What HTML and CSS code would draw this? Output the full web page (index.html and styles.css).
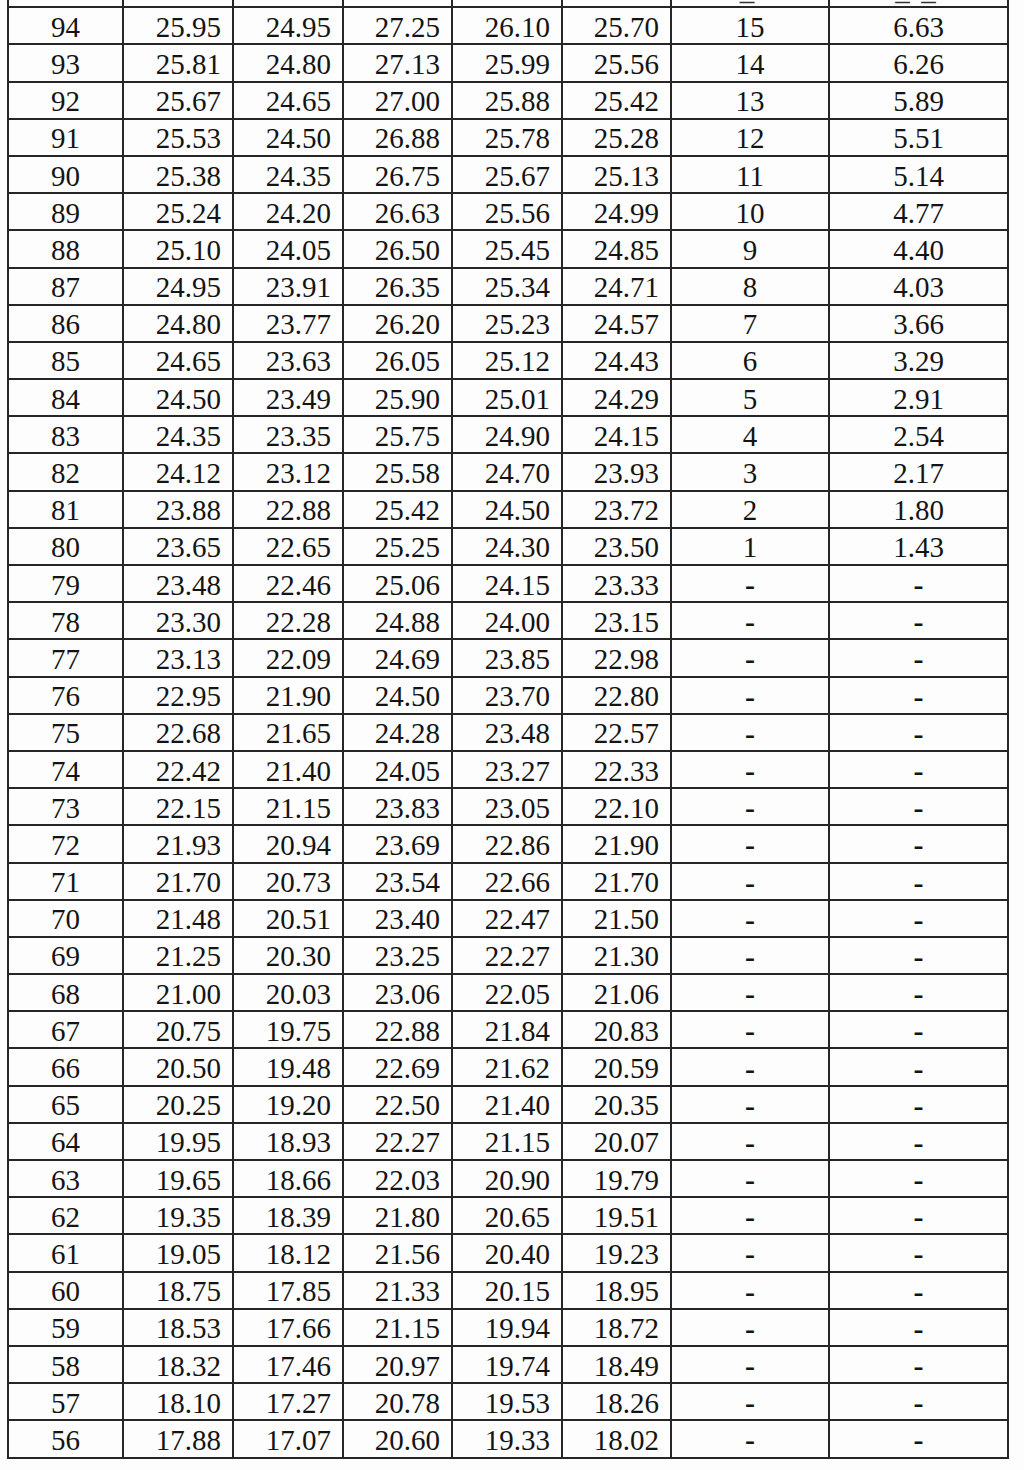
FILE: index.html
```html
<!DOCTYPE html>
<html>
<head>
<meta charset="utf-8">
<link rel="stylesheet" href="styles.css">
</head>
<body>
<table class="grid">
<colgroup>
<col class="c1"><col class="c2"><col class="c3"><col class="c4"><col class="c5"><col class="c6"><col class="c7"><col class="c8">
</colgroup>
<thead>
<tr><th>Item</th><th>R50</th><th>B50</th><th>C50</th><th>D5x</th><th>R5x</th><th>Item_Total</th><th>Sum_s_Total</th></tr>
</thead>
<tbody>
<tr><td>94</td><td>25.95</td><td>24.95</td><td>27.25</td><td>26.10</td><td>25.70</td><td>15</td><td>6.63</td></tr>
<tr><td>93</td><td>25.81</td><td>24.80</td><td>27.13</td><td>25.99</td><td>25.56</td><td>14</td><td>6.26</td></tr>
<tr><td>92</td><td>25.67</td><td>24.65</td><td>27.00</td><td>25.88</td><td>25.42</td><td>13</td><td>5.89</td></tr>
<tr><td>91</td><td>25.53</td><td>24.50</td><td>26.88</td><td>25.78</td><td>25.28</td><td>12</td><td>5.51</td></tr>
<tr><td>90</td><td>25.38</td><td>24.35</td><td>26.75</td><td>25.67</td><td>25.13</td><td>11</td><td>5.14</td></tr>
<tr><td>89</td><td>25.24</td><td>24.20</td><td>26.63</td><td>25.56</td><td>24.99</td><td>10</td><td>4.77</td></tr>
<tr><td>88</td><td>25.10</td><td>24.05</td><td>26.50</td><td>25.45</td><td>24.85</td><td>9</td><td>4.40</td></tr>
<tr><td>87</td><td>24.95</td><td>23.91</td><td>26.35</td><td>25.34</td><td>24.71</td><td>8</td><td>4.03</td></tr>
<tr><td>86</td><td>24.80</td><td>23.77</td><td>26.20</td><td>25.23</td><td>24.57</td><td>7</td><td>3.66</td></tr>
<tr><td>85</td><td>24.65</td><td>23.63</td><td>26.05</td><td>25.12</td><td>24.43</td><td>6</td><td>3.29</td></tr>
<tr><td>84</td><td>24.50</td><td>23.49</td><td>25.90</td><td>25.01</td><td>24.29</td><td>5</td><td>2.91</td></tr>
<tr><td>83</td><td>24.35</td><td>23.35</td><td>25.75</td><td>24.90</td><td>24.15</td><td>4</td><td>2.54</td></tr>
<tr><td>82</td><td>24.12</td><td>23.12</td><td>25.58</td><td>24.70</td><td>23.93</td><td>3</td><td>2.17</td></tr>
<tr><td>81</td><td>23.88</td><td>22.88</td><td>25.42</td><td>24.50</td><td>23.72</td><td>2</td><td>1.80</td></tr>
<tr><td>80</td><td>23.65</td><td>22.65</td><td>25.25</td><td>24.30</td><td>23.50</td><td>1</td><td>1.43</td></tr>
<tr><td>79</td><td>23.48</td><td>22.46</td><td>25.06</td><td>24.15</td><td>23.33</td><td class="dash">-</td><td class="dash">-</td></tr>
<tr><td>78</td><td>23.30</td><td>22.28</td><td>24.88</td><td>24.00</td><td>23.15</td><td class="dash">-</td><td class="dash">-</td></tr>
<tr><td>77</td><td>23.13</td><td>22.09</td><td>24.69</td><td>23.85</td><td>22.98</td><td class="dash">-</td><td class="dash">-</td></tr>
<tr><td>76</td><td>22.95</td><td>21.90</td><td>24.50</td><td>23.70</td><td>22.80</td><td class="dash">-</td><td class="dash">-</td></tr>
<tr><td>75</td><td>22.68</td><td>21.65</td><td>24.28</td><td>23.48</td><td>22.57</td><td class="dash">-</td><td class="dash">-</td></tr>
<tr><td>74</td><td>22.42</td><td>21.40</td><td>24.05</td><td>23.27</td><td>22.33</td><td class="dash">-</td><td class="dash">-</td></tr>
<tr><td>73</td><td>22.15</td><td>21.15</td><td>23.83</td><td>23.05</td><td>22.10</td><td class="dash">-</td><td class="dash">-</td></tr>
<tr><td>72</td><td>21.93</td><td>20.94</td><td>23.69</td><td>22.86</td><td>21.90</td><td class="dash">-</td><td class="dash">-</td></tr>
<tr><td>71</td><td>21.70</td><td>20.73</td><td>23.54</td><td>22.66</td><td>21.70</td><td class="dash">-</td><td class="dash">-</td></tr>
<tr><td>70</td><td>21.48</td><td>20.51</td><td>23.40</td><td>22.47</td><td>21.50</td><td class="dash">-</td><td class="dash">-</td></tr>
<tr><td>69</td><td>21.25</td><td>20.30</td><td>23.25</td><td>22.27</td><td>21.30</td><td class="dash">-</td><td class="dash">-</td></tr>
<tr><td>68</td><td>21.00</td><td>20.03</td><td>23.06</td><td>22.05</td><td>21.06</td><td class="dash">-</td><td class="dash">-</td></tr>
<tr><td>67</td><td>20.75</td><td>19.75</td><td>22.88</td><td>21.84</td><td>20.83</td><td class="dash">-</td><td class="dash">-</td></tr>
<tr><td>66</td><td>20.50</td><td>19.48</td><td>22.69</td><td>21.62</td><td>20.59</td><td class="dash">-</td><td class="dash">-</td></tr>
<tr><td>65</td><td>20.25</td><td>19.20</td><td>22.50</td><td>21.40</td><td>20.35</td><td class="dash">-</td><td class="dash">-</td></tr>
<tr><td>64</td><td>19.95</td><td>18.93</td><td>22.27</td><td>21.15</td><td>20.07</td><td class="dash">-</td><td class="dash">-</td></tr>
<tr><td>63</td><td>19.65</td><td>18.66</td><td>22.03</td><td>20.90</td><td>19.79</td><td class="dash">-</td><td class="dash">-</td></tr>
<tr><td>62</td><td>19.35</td><td>18.39</td><td>21.80</td><td>20.65</td><td>19.51</td><td class="dash">-</td><td class="dash">-</td></tr>
<tr><td>61</td><td>19.05</td><td>18.12</td><td>21.56</td><td>20.40</td><td>19.23</td><td class="dash">-</td><td class="dash">-</td></tr>
<tr><td>60</td><td>18.75</td><td>17.85</td><td>21.33</td><td>20.15</td><td>18.95</td><td class="dash">-</td><td class="dash">-</td></tr>
<tr><td>59</td><td>18.53</td><td>17.66</td><td>21.15</td><td>19.94</td><td>18.72</td><td class="dash">-</td><td class="dash">-</td></tr>
<tr><td>58</td><td>18.32</td><td>17.46</td><td>20.97</td><td>19.74</td><td>18.49</td><td class="dash">-</td><td class="dash">-</td></tr>
<tr><td>57</td><td>18.10</td><td>17.27</td><td>20.78</td><td>19.53</td><td>18.26</td><td class="dash">-</td><td class="dash">-</td></tr>
<tr><td>56</td><td>17.88</td><td>17.07</td><td>20.60</td><td>19.33</td><td>18.02</td><td class="dash">-</td><td class="dash">-</td></tr>
</tbody>
</table>
</body>
</html>
```
FILE: styles.css
```css
html, body {
  margin: 0;
  padding: 0;
  background: #fdfdfd;
}

body {
  font-family: "Liberation Serif", "Times New Roman", serif;
  color: #141414;
}

.grid {
  border-collapse: collapse;
  table-layout: fixed;
  width: 1000px;
  margin: -31px 0 0 7px;
  font-size: 29px;
  line-height: 1;
}

.c1 { width: 115px; }
.c2 { width: 110px; }
.c3 { width: 110px; }
.c4 { width: 109px; }
.c5 { width: 110px; }
.c6 { width: 109px; }
.c7 { width: 158px; }
.c8 { width: 179px; }

.grid th,
.grid td {
  border: 2px solid #262626;
  height: 37.2px;
  padding: 3px 11px 0 0;
  box-sizing: border-box;
  text-align: right;
  vertical-align: middle;
  font-weight: normal;
  white-space: nowrap;
  overflow: hidden;
}

.grid th {
  text-align: center;
  padding: 4px 0 0 0;
  vertical-align: top;
  line-height: 30px;
  color: #333;
}

.grid td:first-child,
.grid td:nth-child(7),
.grid td:nth-child(8) {
  text-align: center;
  padding-right: 0;
}

.grid td.dash {
  font-weight: bold;
  font-size: 30px;
}
```
